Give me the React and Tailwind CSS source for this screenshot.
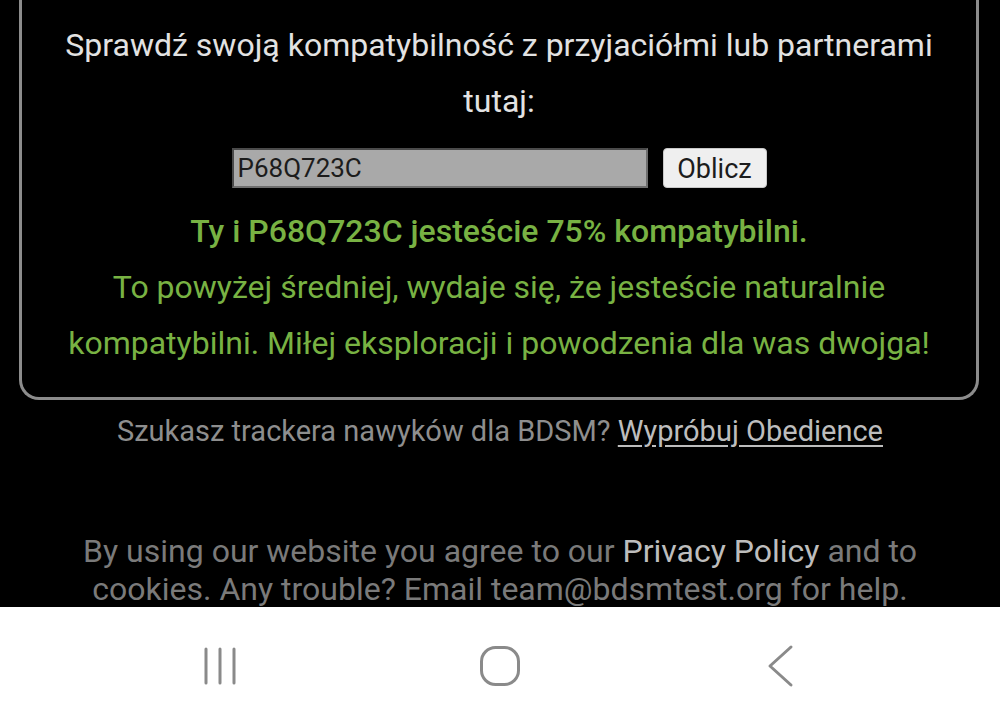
import React from 'react';

// Android nav-bar icons
const RecentsIcon = () => (
  <svg width="36" height="40" viewBox="0 0 36 40" fill="none" stroke="#8a8a8a" strokeWidth="3" strokeLinecap="round">
    <line x1="4" y1="3" x2="4" y2="37" />
    <line x1="18" y1="3" x2="18" y2="37" />
    <line x1="32" y1="3" x2="32" y2="37" />
  </svg>
);

const HomeIcon = () => (
  <svg width="42" height="42" viewBox="0 0 42 42" fill="none" stroke="#8a8a8a" strokeWidth="3">
    <rect x="2.5" y="2.5" width="37" height="37" rx="14" />
  </svg>
);

const BackIcon = () => (
  <svg width="28" height="44" viewBox="0 0 28 44" fill="none" stroke="#8a8a8a" strokeWidth="3" strokeLinecap="round" strokeLinejoin="round">
    <polyline points="25,3 4,22 25,41" />
  </svg>
);

function App() {
  return (
    <div className="w-[1000px] h-[724px] flex flex-col bg-black overflow-hidden" style={{ fontFamily: 'Roboto, "Noto Sans", sans-serif' }}>
      <div className="h-[607px] overflow-hidden">
        <div className="ml-[19px] w-[960px] border-x-[3px] border-b-[3px] border-[#8c8c8c] rounded-b-[20px] pt-[17px] pb-[26px] px-[40px] flex flex-col items-center text-center">
          <p className="text-[32px] leading-[56px] text-[#e2e2e2]">
            Sprawdź swoją kompatybilność z przyjaciółmi lub partnerami tutaj:
          </p>
          <div className="mt-[19px] flex items-center gap-[15px]">
            <input
              readOnly
              value="P68Q723C"
              className="w-[416px] h-[40px] bg-[#a9a9a9] border-[2px] border-t-[#4a4a4a] border-l-[#4a4a4a] border-r-[#6e6e6e] border-b-[#6e6e6e] px-[4px] text-[26px] text-[#1c1c1c] outline-none"
              style={{ fontFamily: 'Roboto, sans-serif' }}
            />
            <button className="w-[104px] h-[40px] bg-[#efefef] border border-[#c8c8c8] rounded-[4px] text-[27px] text-[#1c1c1c]">
              Oblicz
            </button>
          </div>
          <p className="mt-[15px] text-[32px] leading-[56px] font-medium text-[#78b243]">
            Ty i P68Q723C jesteście 75% kompatybilni.
          </p>
          <p className="text-[32px] leading-[56px] text-[#78b243]">
            To powyżej średniej, wydaje się, że jesteście naturalnie kompatybilni. Miłej eksploracji i powodzenia dla was dwojga!
          </p>
        </div>
        <p className="mt-[13px] text-center text-[29px] leading-[36px] text-[#8e8e8e]">
          Szukasz trackera nawyków dla BDSM?{' '}
          <a className="text-[#bdbdbd] underline underline-offset-[4px]">Wypróbuj Obedience</a>
        </p>
        <p className="mt-[83px] px-[60px] text-center text-[32px] leading-[38px] text-[#7a7a7a]">
          By using our website you agree to our <span className="text-[#bdbdbd]">Privacy Policy</span> and to cookies. Any trouble? Email team@bdsmtest.org for help.
        </p>
      </div>
      <div className="flex-1 bg-white flex justify-center items-center">
        <div className="w-[280px] flex justify-center">
          <RecentsIcon />
        </div>
        <div className="w-[280px] flex justify-center">
          <HomeIcon />
        </div>
        <div className="w-[280px] flex justify-center">
          <BackIcon />
        </div>
      </div>
    </div>
  );
}

export default App;
